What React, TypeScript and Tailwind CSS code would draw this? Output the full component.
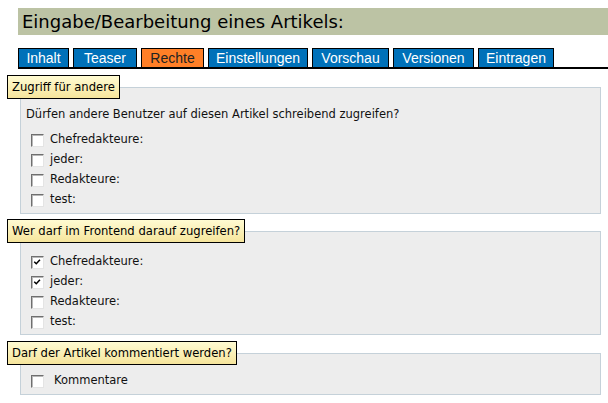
import { ReactNode } from 'react';

const tabs = [
  { label: 'Inhalt', w: 'w-[51px]' },
  { label: 'Teaser', w: 'w-[64px]' },
  { label: 'Rechte', w: 'w-[63px]' },
  { label: 'Einstellungen', w: 'w-[100px]' },
  { label: 'Vorschau', w: 'w-[77px]' },
  { label: 'Versionen', w: 'w-[81px]' },
  { label: 'Eintragen', w: 'w-[76px]' },
];

function Checkbox({ checked }: { checked?: boolean }) {
  return (
    <span className="relative inline-block w-[13px] h-[13px] shrink-0 bg-white border border-t-[#6f6f6f] border-l-[#6f6f6f] border-r-[#e4e4e4] border-b-[#e4e4e4] shadow-[inset_1px_1px_0_#b8b8b8]">
      {checked && (
        <svg viewBox="0 0 11 11" className="absolute left-[1px] top-[1px] w-[9px] h-[9px]">
          <path d="M1.5 4.5 L4 7 L8.5 2" fill="none" stroke="#000" strokeWidth="1.8" />
        </svg>
      )}
    </span>
  );
}

function Row({ label, checked, wide }: { label: string; checked?: boolean; wide?: boolean }) {
  return (
    <div className={`flex items-center h-[20px] ${wide ? 'gap-[10px]' : 'gap-[6px]'}`}>
      <Checkbox checked={checked} />
      <span>{label}</span>
    </div>
  );
}

function Section({ legend, children, className }: { legend: string; children: ReactNode; className?: string }) {
  return (
    <div className={className}>
      <div className="relative z-10 ml-[7px] inline-block h-[24px] px-[4px] leading-[22px] border border-black bg-gradient-to-b from-[#fffbd2] to-[#f6e59c] text-[11.6px] text-black">
        {legend}
      </div>
      <div className="ml-[20px] mr-[7px] -mt-[12px] border border-[#c5d1d9] bg-[#ededed]">{children}</div>
    </div>
  );
}

export default function App() {
  return (
    <div className="w-[608px] h-[403px] bg-white overflow-hidden text-[11.5px] text-[#111] font-['DejaVu_Sans',Verdana,sans-serif]">
      <div className="ml-[18px] mt-[8px] h-[27px] bg-[#bcc3a4] pl-[4px] flex items-center text-[18px] text-black">
        Eingabe/Bearbeitung eines Artikels:
      </div>
      <div className="mt-[13px] ml-[18px] flex gap-[4px] h-[19px] border-b-2 border-black box-content font-['Liberation_Sans',Arial,sans-serif] text-[14px]">
        {tabs.map((t) => (
          <div
            key={t.label}
            className={`${t.w} h-[19px] border border-black border-b-0 leading-[18px] text-center ${
              t.label === 'Rechte' ? 'bg-[#ff7f27] text-[#222]' : 'bg-[#0071b9] text-white'
            }`}
          >
            {t.label}
          </div>
        ))}
      </div>

      <Section legend="Zugriff für andere" className="mt-[6px]">
        <div className="pl-[5px] pt-[16px] pb-[3px]">
          <div className="h-[20px] leading-[20px]">Dürfen andere Benutzer auf diesen Artikel schreibend zugreifen?</div>
          <div className="pl-[5px] pt-[6px]">
            <Row label="Chefredakteure:" />
            <Row label="jeder:" />
            <Row label="Redakteure:" />
            <Row label="test:" />
          </div>
        </div>
      </Section>

      <Section legend="Wer darf im Frontend darauf zugreifen?" className="mt-[5px]">
        <div className="pl-[10px] pt-[20px] pb-[2px]">
          <Row label="Chefredakteure:" checked />
          <Row label="jeder:" checked />
          <Row label="Redakteure:" />
          <Row label="test:" />
        </div>
      </Section>

      <Section legend="Darf der Artikel kommentiert werden?" className="mt-[6px]">
        <div className="pl-[10px] pt-[17px] pb-[3px]">
          <Row label="Kommentare" wide />
        </div>
      </Section>
    </div>
  );
}
